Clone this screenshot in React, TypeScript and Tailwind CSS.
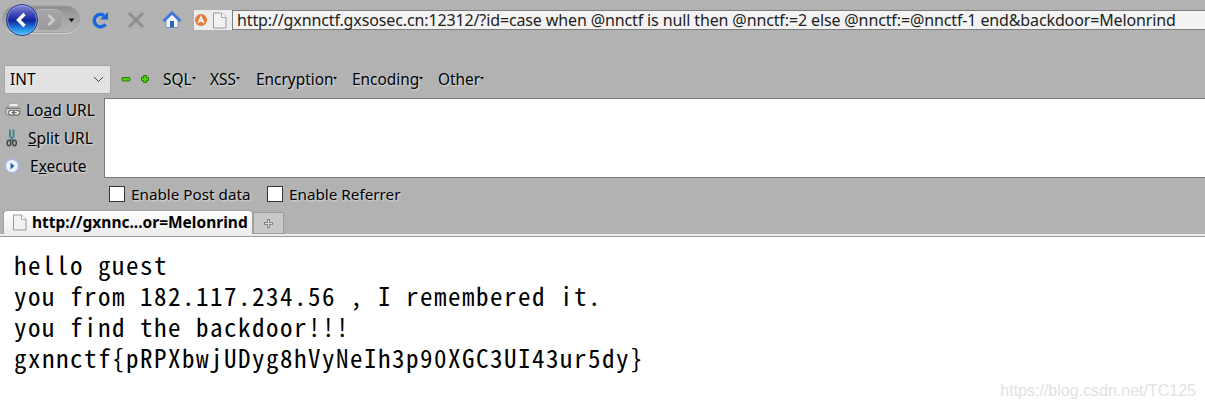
import React from "react";

const ui = "font-['Noto_Sans','Open_Sans',sans-serif]";
const halo = "[text-shadow:1px_1px_2px_rgba(255,255,255,0.65)]";

function PageIcon({ className = "" }: { className?: string }) {
  return (
    <svg className={className} width="14" height="17" viewBox="0 0 14 17">
      <path d="M.5 1h8L13 5.500V16H.5z" fill="#f2f2f2" stroke="#999" />
      <path d="M8.500 1v4.500H13" fill="#fff" stroke="#aaa" />
    </svg>
  );
}

function NavButtons() {
  return (
    <svg width="82" height="40" viewBox="0 0 82 40" className="shrink-0">
      <defs>
        <linearGradient id="ball" x1="0" y1="0" x2="0" y2="1">
          <stop offset="0" stopColor="#8990d8" />
          <stop offset=".35" stopColor="#3540b4" />
          <stop offset=".52" stopColor="#10249b" />
          <stop offset=".75" stopColor="#1f7de0" />
          <stop offset="1" stopColor="#48d0fa" />
        </linearGradient>
        <linearGradient id="pill" x1="0" y1="0" x2="0" y2="1">
          <stop offset="0" stopColor="#8c8c8c" />
          <stop offset=".35" stopColor="#9f9f9f" />
          <stop offset="1" stopColor="#b4b4b4" />
        </linearGradient>
        <linearGradient id="fwd" x1="0" y1="0" x2="0" y2="1">
          <stop offset="0" stopColor="#a6a6a6" />
          <stop offset="1" stopColor="#999" />
        </linearGradient>
      </defs>
      <rect x="2.500" y="7" width="77" height="27" rx="13.500" fill="#d4d4d4" />
      <rect x="2.500" y="6" width="77" height="26.500" rx="13" fill="url(#pill)" stroke="#a0a0a0" />
      <path d="M38 9.500h17q8 1 8 10.500t-8 10.500H38z" fill="url(#fwd)" stroke="#b3b3b3" />
      <path d="M48.500 15l5 5-5 5" fill="none" stroke="#cbcbcb" strokeWidth="2.800" />
      <circle cx="22" cy="20" r="15.500" fill="url(#ball)" stroke="#24358c" />
      <circle cx="22" cy="20" r="14.500" fill="none" stroke="#a9b9f0" strokeOpacity=".6" />
      <path d="M24.500 14L18.500 20l6 6" fill="none" stroke="#fff" strokeWidth="3.400" />
      <path d="M68.500 18.500h6L71.500 22z" fill="#111" />
    </svg>
  );
}

function Reload() {
  return (
    <svg width="18" height="18" viewBox="0 0 18 18">
      <path d="M14.500 13.200A6.200 6.200 0 1 1 13 4.500" fill="none" stroke="#1768df" strokeWidth="3.400" />
      <path d="M17 1v7.500H9z" fill="#1768df" />
    </svg>
  );
}

function Stop() {
  return (
    <svg width="18" height="18" viewBox="0 0 18 18">
      <path d="M2 2l14 14M16 2L2 16" stroke="#8f8f8f" strokeWidth="3" />
    </svg>
  );
}

function Home() {
  return (
    <svg width="20" height="18" viewBox="0 0 20 18" className="-ml-px">
      <path d="M4 8.500L10 3l6 5.500V16.500H4z" fill="#f3f7ff" stroke="#7c92c4" />
      <path d="M1.500 10L10 2l8.500 8" fill="none" stroke="#3d78dc" strokeWidth="2.800" />
      <path d="M8 10h4v6.500H8z" fill="#2a67b8" />
    </svg>
  );
}

function Minus() {
  return (
    <svg width="10" height="10" viewBox="0 0 10 10">
      <rect x="1" y="3.500" width="8" height="3.500" rx="1" fill="#52cf0a" stroke="#277a05" />
    </svg>
  );
}

function Plus() {
  return (
    <svg width="10" height="10" viewBox="0 0 10 10">
      <path d="M3.500 1.500h3v2h2v3h-2v2h-3v-2h-2v-3h2z" fill="#52cf0a" stroke="#277a05" strokeLinejoin="round" />
    </svg>
  );
}

function Printer() {
  return (
    <svg width="16" height="16" viewBox="0 0 16 16">
      <path d="M3 6L4.500 1.500h8L14 6z" fill="#ededed" stroke="#aaa" />
      <rect x=".5" y="5" width="14.500" height="8" rx="2" fill="#c4c4c4" stroke="#8a8a8a" />
      <path d="M1.500 6.500h12.500" stroke="#777" />
      <rect x="3.500" y="8.500" width="6" height="4.500" rx="2" fill="#eee" stroke="#555" />
      <rect x="8.500" y="8.500" width="6" height="4.500" rx="2" fill="#eee" stroke="#555" />
      <path d="M6.500 10.700h5" stroke="#555" />
    </svg>
  );
}

function Scissors() {
  return (
    <svg width="12" height="18" viewBox="0 0 12 18">
      <path d="M4 .5v7L7.500 12M7.500 .5v7L4 12" fill="none" stroke="#4d8391" strokeWidth="2" />
      <ellipse cx="3" cy="14" rx="1.800" ry="2.700" fill="none" stroke="#444" strokeWidth="1.500" />
      <ellipse cx="8.500" cy="14" rx="1.800" ry="2.700" fill="none" stroke="#444" strokeWidth="1.500" />
    </svg>
  );
}

function Play() {
  return (
    <svg width="16" height="16" viewBox="0 0 16 16">
      <circle cx="8" cy="8" r="6.800" fill="#eef3fd" stroke="#a5b8de" strokeWidth="1.600" />
      <path d="M6.500 4.500L10.500 8l-4 3.500z" fill="#2562b4" />
    </svg>
  );
}

function Menu({ label, width }: { label: string; width: string }) {
  return (
    <div className={`flex items-center ${width}`}>
      <span className="pt-px">{label}</span>
      <svg width="4" height="3" viewBox="0 0 4 3" className="shrink-0">
        <path d="M0 0h4L2 2.500z" fill="#000" />
      </svg>
    </div>
  );
}

const response = `hello guest
you from 182.117.234.56 , I remembered it.
you find the backdoor!!!
gxnnctf{pRPXbwjUDyg8hVyNeIh3p90XGC3UI43ur5dy}`;

export default function App() {
  return (
    <div className={`h-[409px] w-[1205px] overflow-hidden bg-white text-black ${ui}`}>
      <header className="flex h-[237px] flex-col border-b border-[#9a9a9a] bg-[#b2b2b2]">
        <div className="flex h-[40px] shrink-0">
          <NavButtons />
          <div className="flex w-[112px] items-center gap-[18px] pl-[9px]">
            <Reload />
            <Stop />
            <Home />
          </div>
          <div className="mt-[10px] flex h-5 w-[38px] items-center gap-[6px] bg-[#ececec] pl-px">
            <svg width="12" height="12" viewBox="0 0 12 12">
              <circle cx="6" cy="6" r="6" fill="#e37b3a" />
              <path d="M3.200 9L6 2.800 8.800 9M4.200 7h3.600" fill="none" stroke="#fff" strokeWidth="1.500" />
            </svg>
            <PageIcon />
          </div>
          <div className="mt-[10px] flex h-5 flex-1 items-center border-y border-l border-[#7d7d7d] bg-[#f3f3f3] pl-[4px] text-[16px] tracking-[-0.125px] text-[#222]">
            <span className="whitespace-pre">http://gxnnctf.gxsosec.cn:12312/?id=case when @nnctf is null then @nnctf:=2 else @nnctf:=@nnctf-1 end&amp;backdoor=Melonrind</span>
          </div>
        </div>

        <div className={`mt-[24px] flex h-[30px] shrink-0 items-center text-[15.400px] ${halo}`}>
          <div className="ml-[4px] flex h-[29px] w-[107px] items-center justify-between border border-[#a6a6a6] bg-[#e2e2e2] pl-[5px] pr-[6px]">
            <span className="pt-[2px]">INT</span>
            <svg width="11" height="7" viewBox="0 0 11 7">
              <path d="M1 1l4.500 4.500L10 1" fill="none" stroke="#444" />
            </svg>
          </div>
          <div className="flex w-[52px] gap-[9px] pl-[10px]">
            <Minus />
            <Plus />
          </div>
          <Menu label="SQL" width="w-[47px]" />
          <Menu label="XSS" width="w-[46px]" />
          <Menu label="Encryption" width="w-[96px]" />
          <Menu label="Encoding" width="w-[86px]" />
          <Menu label="Other" width="w-[60px]" />
        </div>

        <div className="mt-[3px] flex h-[82px] shrink-0">
          <div className={`-mt-px flex w-[104px] flex-col text-[15.500px] leading-[28px] ${halo}`}>
            <div className="flex h-[28px] items-center pl-[5px]">
              <span className="w-[21px]"><Printer /></span>
              <span>Lo<u>a</u>d URL</span>
            </div>
            <div className="flex h-[28px] items-center pl-[6px]">
              <span className="w-[22px]"><Scissors /></span>
              <span><u>S</u>plit URL</span>
            </div>
            <div className="flex h-[28px] items-center pl-[4px]">
              <span className="w-[26px]"><Play /></span>
              <span>E<u>x</u>ecute</span>
            </div>
          </div>
          <div className="mt-px h-[80px] flex-1 border-y border-l border-[#7a7a7a] bg-white" />
        </div>

        <div className={`flex h-[31px] shrink-0 items-center pl-[109px] text-[15.250px] ${halo}`}>
          <span className="-mt-px h-4 w-4 border border-[#333] bg-white" />
          <span className="w-[142px] pl-[6px]">Enable Post data</span>
          <span className="-mt-px h-4 w-4 border border-[#333] bg-white" />
          <span className="pl-[6px]">Enable Referrer</span>
        </div>

        <div className="flex h-[26px] shrink-0 items-end border-b-2 border-[#ededed]">
          <div className="ml-[3px] flex h-[24px] w-[250px] items-center rounded-t-[4px] border border-b-0 border-[#a0a0a0] bg-gradient-to-b from-white to-[#ececec] pl-[9px]">
            <PageIcon />
            <span className="whitespace-pre pl-[5px] text-[15.500px] font-bold">http://gxnnc...or=Melonrind</span>
          </div>
          <div className="flex h-[22px] w-[31px] items-center justify-center border border-[#9d9d9d] bg-[#c8c8c8]">
            <svg width="9" height="9" viewBox="0 0 9 9">
              <path d="M4.500 0v9M0 4.500h9" stroke="#777" strokeWidth="2.500" />
              <path d="M4.500 1v7M1 4.500h7" stroke="#ddd" />
            </svg>
          </div>
        </div>
      </header>

      <main className="flex h-[172px] flex-col justify-between pl-[14px] pt-[12px]">
        <pre className="font-['Noto_Sans_Mono_CJK_SC','Liberation_Mono',monospace] text-[25px] leading-[31px] tracking-[1.500px]">{response}</pre>
        <div className="self-end pb-[8px] pr-[9px] font-['Liberation_Sans',sans-serif] text-[16px] leading-5 text-[#e2e2e2]">https://blog.csdn.net/TC125</div>
      </main>
    </div>
  );
}
